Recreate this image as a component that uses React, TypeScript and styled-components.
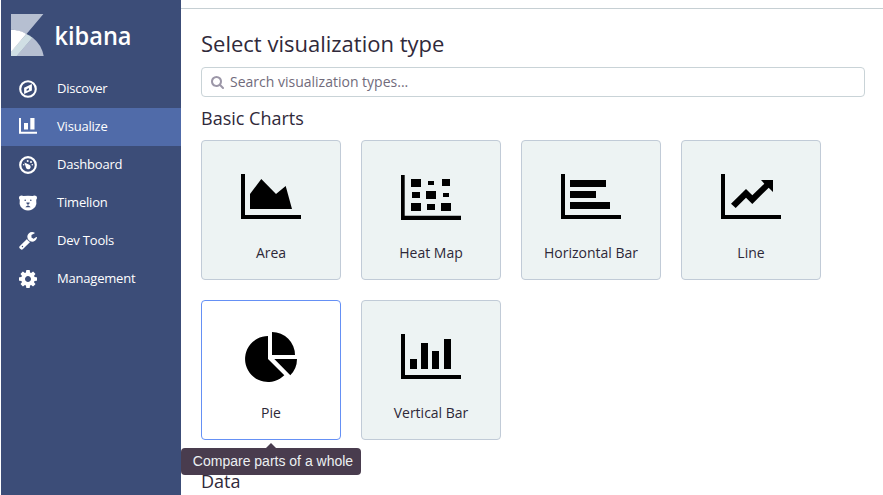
import React from "react";
import styled, { createGlobalStyle, css } from "styled-components";

const GlobalStyle = createGlobalStyle`
  * { box-sizing: border-box; }
  html, body { margin: 0; height: 100%; overflow: hidden; }
  body {
    background: #fff;
    color: #2d2d2d;
    font-family: "Open Sans", "Noto Sans", sans-serif;
    font-size: 14px;
  }
`;

const Page = styled.div`
  display: flex;
  height: 495px;
  width: 883px;
  padding-left: 1px;
  overflow: hidden;
`;

const Sidebar = styled.nav`
  flex: 0 0 180px;
  background: #3c4d78;
  color: #fff;
`;

const Brand = styled.div`
  height: 70px;
  padding: 14px 0 0 10px;
`;

const NavItem = styled.div<{ $active?: boolean }>`
  display: flex;
  align-items: center;
  height: 38px;
  padding-left: 18px;
  gap: 20px;
  font-size: 13px;
  line-height: 18px;
  letter-spacing: -0.2px;
  background: ${(p) => (p.$active ? "#506ba9" : "transparent")};
`;

const NavLabel = styled.span`
  padding-bottom: 2px;
`;

const NavIcon = styled.svg`
  flex: none;
  width: 18px;
  height: 18px;
  fill: #fff;
  overflow: visible;
`;

const Main = styled.main`
  flex: 1;
  margin-top: 8px;
  border-top: 1px solid #c6cfd3;
  padding: 19px 18px 0 20px;
`;

const Title = styled.h1`
  margin: 0;
  height: 39px;
  font-size: 22px;
  line-height: 30px;
  font-weight: 400;
  color: #30293a;
`;

const SearchBox = styled.div`
  display: flex;
  align-items: center;
  height: 30px;
  padding-left: 9px;
  gap: 6px;
  border: 1px solid #c9d3d7;
  border-radius: 4px;
  color: #716b7b;
  line-height: 20px;
`;

const SearchIcon = styled.svg`
  width: 13px;
  height: 13px;
  fill: #9c97a8;
`;

const Heading = styled.h2`
  margin: 0;
  height: 43px;
  padding-top: 9px;
  font-size: 18px;
  line-height: 25px;
  font-weight: 400;
  color: #30293a;
`;

const Cards = styled.div`
  display: grid;
  grid-template-columns: repeat(4, 140px);
  gap: 20px;
`;

const Card = styled.div<{ $hover?: boolean }>`
  position: relative;
  display: flex;
  flex-direction: column;
  align-items: center;
  height: 140px;
  padding-top: 33px;
  border: 1px solid #c1cbd7;
  border-radius: 4px;
  background: #edf3f3;
  ${(p) =>
    p.$hover &&
    css`
      background: #fff;
      border-color: #6590f5;
    `}
`;

const CardIcon = styled.svg`
  width: 60px;
  height: 45px;
  overflow: visible;
`;

const CardLabel = styled.div`
  margin-top: 24px;
  line-height: 20px;
  color: #2d2838;
`;

const Tooltip = styled.div`
  position: absolute;
  top: 147px;
  left: -21px;
  width: 180px;
  height: 27px;
  padding-left: 4px;
  border-radius: 4px;
  background: #493c4e;
  color: #ecf0f2;
  font: 14px/26px "Liberation Sans", Arial, sans-serif;
  text-align: center;
  white-space: nowrap;
  z-index: 1;

  &::before {
    content: "";
    position: absolute;
    top: -5px;
    left: 85px;
    border: 5px solid transparent;
    border-top: 0;
    border-bottom-color: #493c4e;
  }
`;

const DataHeading = styled(Heading)`
  padding-top: 29px;
`;

const Logo = () => (
  <svg width="125" height="44" viewBox="11 14 125 44" role="img" aria-label="kibana">
    <path fill="#b6bfd1" d="M11 14H43.4L26.3 34.3Q19 29.8 11 29.8Z" />
    <path fill="#b6bfd1" d="M32.5 37.5Q41.5 44.5 43.7 56H16.5Z" />
    <path fill="#d0dfe4" d="M26.3 34.1Q29.5 35.3 32.5 37.8L16.8 56H11V51.5Z" />
    <path fill="#fff" d="M11 29.8Q19.3 29.8 26.3 33.9L11 52Z" />
    <text
      x="54.5"
      y="44.7"
      textLength="77"
      lengthAdjust="spacingAndGlyphs"
      fill="#fff"
      fontFamily="Open Sans, sans-serif"
      fontSize="25.5"
      fontWeight="600"
    >
      kibana
    </text>
  </svg>
);

const navItems = [
  {
    label: "Discover",
    box: "0 0 18 18",
    icon: (
      <>
        <circle cx="9" cy="9" r="7.8" fill="none" stroke="#fff" strokeWidth="2.1" />
        <path fillRule="evenodd" d="M12.9 4V10.4L5.1 14V7.7ZM7.6 9.2V11.1L9.9 9.9V8.1Z" />
      </>
    ),
  },
  {
    label: "Visualize",
    box: "0 0 18 18",
    active: true,
    icon: <path d="M0 0H2V13.7H18V15.7H0ZM5 5H9V11.5H5ZM11.3 0H15.5V11.5H11.3Z" />,
  },
  {
    label: "Dashboard",
    box: "0 0 18 18",
    icon: (
      <>
        <circle cx="9" cy="9" r="7.8" fill="none" stroke="#fff" strokeWidth="2.2" />
        <path d="M5.4 6.4L10.3 8.8A2.4 2.4 0 1 1 7 11.8Z" />
        <circle cx="4.7" cy="8.8" r=".8" />
        <circle cx="8.7" cy="4.9" r="1" />
        <circle cx="12" cy="5.9" r="1" />
        <circle cx="13.3" cy="8.8" r=".8" />
      </>
    ),
  },
  {
    label: "Timelion",
    box: "0 0 18 18",
    icon: (
      <>
        <path d="M1.5 1.8Q3 1.3 4.4 2.1Q9 1.3 13.6 2.1Q15 1.3 16.5 1.8Q18.3 2.2 18 4Q17.9 5.2 17.2 5.8Q18 10.5 16.3 12.8Q13.5 16.4 9 16.4T1.7 12.8Q0 10.5 .8 5.8Q.1 5.2 0 4Q-.3 2.2 1.5 1.8Z" />
        <g fill="#3c4d78">
          <circle cx="6.2" cy="6.3" r=".8" />
          <circle cx="11.8" cy="6.3" r=".8" />
          <path d="M7.3 8.5H10.7Q10.7 9.8 9.3 10.5V11.7Q11 11.9 11.6 13.3H6.4Q7 11.9 8.7 11.7V10.5Q7.3 9.8 7.3 8.5Z" />
        </g>
      </>
    ),
  },
  {
    label: "Dev Tools",
    box: "64 128 1664 1664",
    icon: (
      <path d="M448 1472q0-26-19-45t-45-19-45 19-19 45 19 45 45 19 45-19 19-45zm644-420l-682 682q-37 37-90 37-52 0-91-37l-106-108q-38-36-38-90 0-53 38-91l681-681q39 98 114.5 173.5t173.5 114.5zm634-435q0 39-23 106-47 134-164.5 217.5t-258.5 83.5q-185 0-316.5-131.5t-131.5-316.5 131.5-316.5 316.5-131.5q58 0 121.5 16.5t107.5 46.5q16 11 16 28t-16 28l-293 169v224l193 107q5-3 79-48.5t135.5-81 70.5-35.5q15 0 23.5 10t8.5 25z" />
    ),
  },
  {
    label: "Management",
    box: "128 128 1536 1536",
    icon: (
      <path d="M1152 896q0-106-75-181t-181-75-181 75-75 181 75 181 181 75 181-75 75-181zm512-109v222q0 12-8 23t-20 13l-185 28q-19 54-39 91 35 50 107 138 10 12 10 25t-9 23q-27 37-99 108t-94 71q-12 0-26-9l-138-108q-44 23-91 38-16 136-29 186-7 28-36 28h-222q-14 0-24.5-8.5t-11.5-21.5l-28-184q-49-16-90-37l-141 107q-10 9-25 9-14 0-25-11-126-114-165-168-7-10-7-23 0-12 8-23 15-21 51-66.5t54-70.5q-27-50-41-99l-183-27q-13-2-21-12.5t-8-23.5v-222q0-12 8-23t19-13l186-28q14-46 39-92-40-57-107-138-10-12-10-24 0-10 9-23 26-36 98.5-107.5t94.5-71.5q13 0 26 10l138 107q44-23 91-38 16-136 29-186 7-28 36-28h222q14 0 24.5 8.5t11.5 21.5l28 184q49 16 90 37l142-107q9-9 24-9 13 0 25 10 129 119 165 170 7 8 7 22 0 12-8 23-15 21-51 66.5t-54 70.5q26 50 41 98l183 28q13 2 21 12.5t8 23.5z" />
    ),
  },
];

const axes = "M0 0H4V41H60V45H0Z";

const charts = [
  { label: "Area", d: axes + "M9 20L20.3 5L35 20L44.7 12L51 35H9Z" },
  {
    label: "Heat Map",
    d: "M0 1H3.7V41.7H60V46H0ZM10 5h10v8h-10zM27 7h6v4h-6zM41 5h8v7h-8zM11 18h8v6h-8zM25 17h10v8h-10zM42 19h6v4h-6zM10 29h10v8h-10zM26 30h8v6h-8zM40 29h10v8h-10z",
  },
  { label: "Horizontal Bar", d: axes + "M9 6h36v7H9zM9 17h26v7H9zM9 28h40v7H9z" },
  {
    label: "Line",
    d: axes + "M10 29.7L25 15L31.3 21.3L43.3 9.7L40 6H52V18L47.7 13.7L31.3 30L25 23.7L14.7 34Z",
  },
  {
    label: "Pie",
    tip: "Compare parts of a whole",
    d: "M27 25V2A23 23 0 1 0 43.3 41.3ZM31 21V-2A23 23 0 0 1 54 21ZM33.3 25H56A23 23 0 0 1 49.3 41.3Z",
  },
  {
    label: "Vertical Bar",
    d: axes + "M9 25h7v10H9zM20 9h7v26h-7zM31 17h7v18h-7zM43 5h7v30h-7z",
  },
];

export default function App() {
  return (
    <>
      <GlobalStyle />
      <Page>
        <Sidebar>
          <Brand>
            <Logo />
          </Brand>
          {navItems.map((item) => (
            <NavItem key={item.label} $active={item.active}>
              <NavIcon viewBox={item.box}>{item.icon}</NavIcon>
              <NavLabel>{item.label}</NavLabel>
            </NavItem>
          ))}
        </Sidebar>
        <Main>
          <Title>Select visualization type</Title>
          <SearchBox>
            <SearchIcon viewBox="64 128 1664 1664">
              <path d="M1216 832q0-185-131.5-316.5t-316.5-131.5-316.5 131.5-131.5 316.5 131.5 316.5 316.5 131.5 316.5-131.5 131.5-316.5zm512 832q0 52-38 90t-90 38q-54 0-90-38l-343-342q-179 124-399 124-143 0-273.5-55.5t-225-150-150-225-55.5-273.5 55.5-273.5 150-225 225-150 273.5-55.5 273.5 55.5 225 150 150 225 55.5 273.5q0 220-124 399l343 343q37 37 37 90z" />
            </SearchIcon>
            Search visualization types...
          </SearchBox>
          <Heading>Basic Charts</Heading>
          <Cards>
            {charts.map((chart) => (
              <Card key={chart.label} $hover={!!chart.tip}>
                <CardIcon viewBox="0 0 60 45">
                  <path d={chart.d} />
                </CardIcon>
                <CardLabel>{chart.label}</CardLabel>
                {chart.tip && <Tooltip>{chart.tip}</Tooltip>}
              </Card>
            ))}
          </Cards>
          <DataHeading>Data</DataHeading>
        </Main>
      </Page>
    </>
  );
}
